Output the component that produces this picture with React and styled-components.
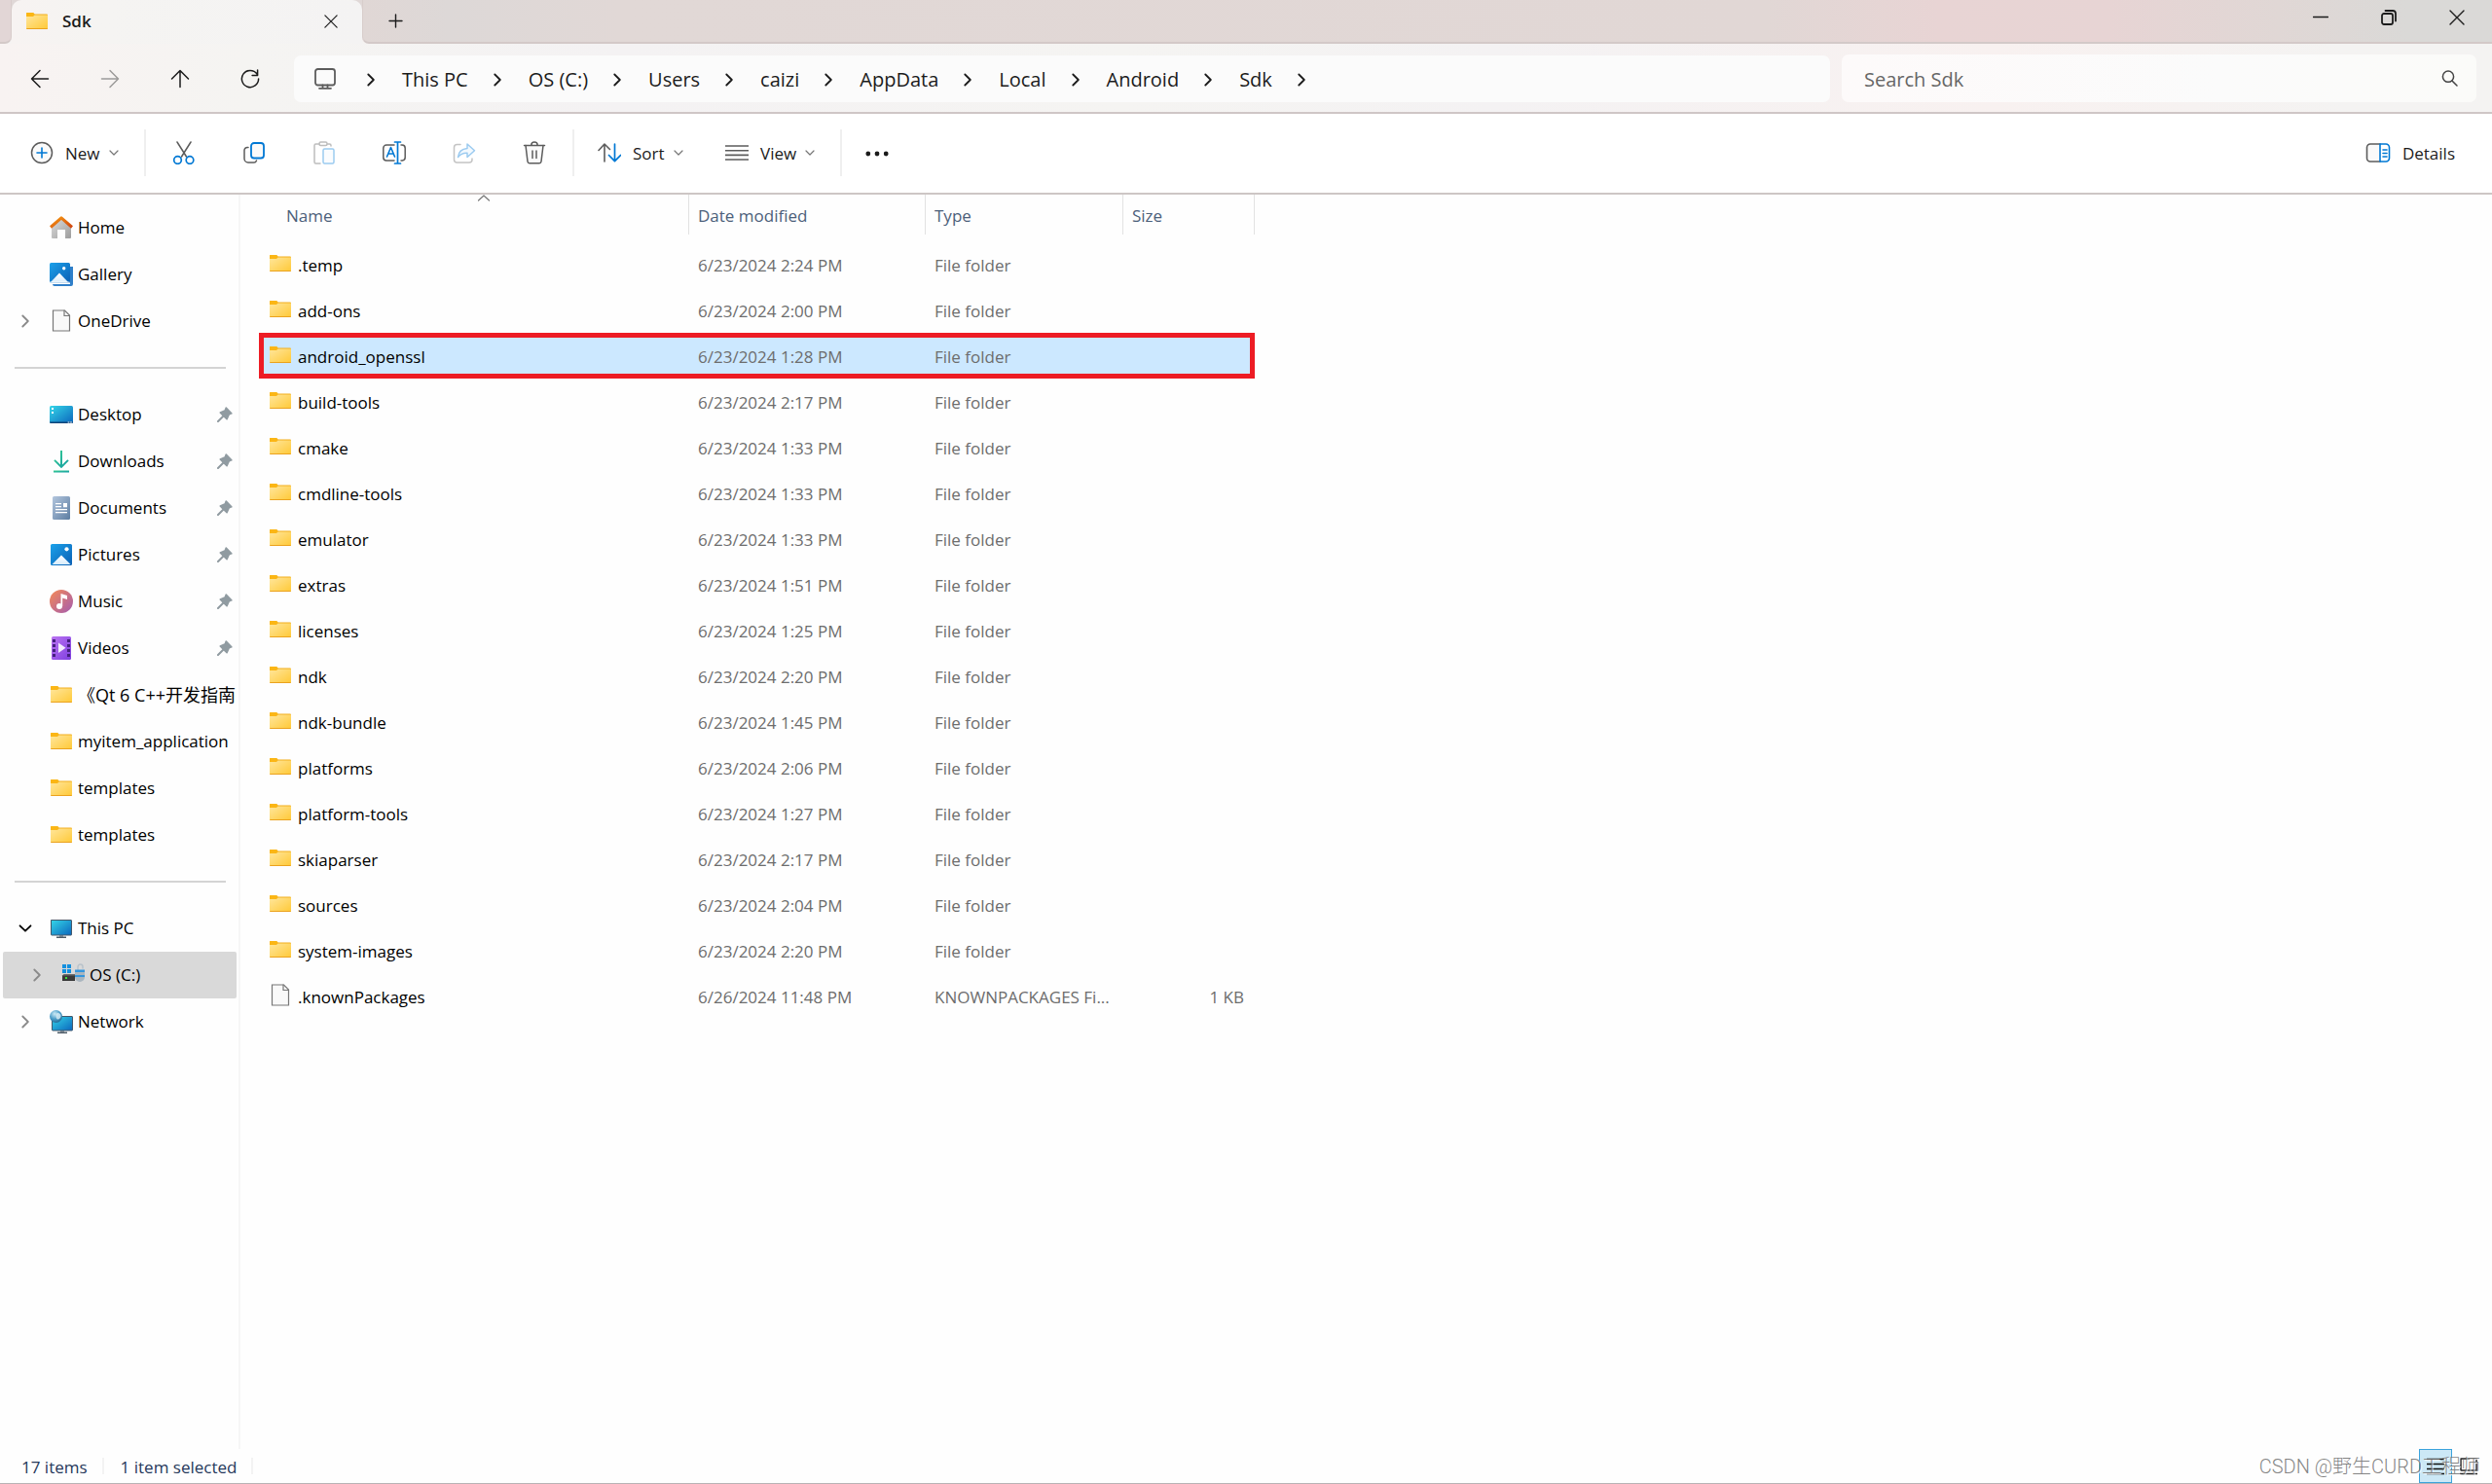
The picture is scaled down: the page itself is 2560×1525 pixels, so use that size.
import React from "react";
import styled, { createGlobalStyle, css } from "styled-components";

const GlobalStyle = createGlobalStyle`
  *, *::before, *::after { box-sizing: border-box; }
  body { margin: 0; background: #fefefe; }
  body, button, input {
    font-family: "Open Sans", "Noto Sans CJK SC", sans-serif;
    font-size: 17px;
    line-height: 24px;
    color: #1b1b1b;
  }
  button { border: 0; padding: 0; background: none; cursor: pointer; }
  svg { display: block; flex: none; }
`;

/* ---------- window frame ---------- */

const Window = styled.div`
  display: flex;
  flex-direction: column;
  min-height: 100vh;
  border-bottom: 1px solid #b9b2b4;
  background: #fefefe;
`;

const TitleBar = styled.header`
  display: flex;
  height: 45px;
  background: #f5f3f2;
`;

const TitleEdge = styled.div`
  width: 12px;
  background: #e2d6d6;
  border-right: 1px solid #d8cdcb;
  border-bottom: 2px solid #d3c9c8;
  border-bottom-right-radius: 7px;
`;

const TabSlot = styled.div`
  width: 360px;
  background: linear-gradient(#e0d8d7 20px, #f5f3f2 20px);
`;

const Tab = styled.div`
  display: flex;
  align-items: center;
  height: 100%;
  padding: 0 20px 2px 14px;
  border-radius: 10px 10px 0 0;
  background: linear-gradient(90deg, #f7f3f2, #f5f4f2 25%, #f4f3f3);
`;

const TabTitle = styled.span`
  flex: 1;
  padding-left: 14px;
  font-weight: 600;
`;

const TitleRest = styled.div`
  display: flex;
  flex: 1;
  align-items: flex-start;
  justify-content: space-between;
  border-left: 1px solid #d8cdcb;
  border-bottom: 2px solid #d3c9c8;
  border-bottom-left-radius: 7px;
  background: linear-gradient(90deg, #e0d7d5, #ddd8d7 4%, #e1d8d6 12%, #e1d7d5 66%, #e8d4d4 74%, #e7d4d4 82%, #e0d7d5 90%, #dad9d7 96%);
`;

const FrameButton = styled.button`
  display: flex;
  align-items: center;
  justify-content: center;
  width: ${(p) => p.$width || 70}px;
  height: ${(p) => p.$height || 36}px;
`;

const WindowButtons = styled.div`
  display: flex;
  padding-right: 1px;
`;

/* ---------- navigation ---------- */

const NavBar = styled.div`
  display: flex;
  align-items: center;
  height: 72px;
  padding: 1px 16px 0 5px;
  border-bottom: 2px solid #cfc6c6;
  background: linear-gradient(90deg, #f8f3f2, #f5f4f2 10%, #f4f2f3 25%, #f5f4f2 45%, #f4f2f3 60%, #f8f1f0 80%, #f6f2f1 88%, #f4f3f2 94%);
`;

const NavButton = styled.button`
  display: flex;
  align-items: center;
  justify-content: center;
  width: 72px;
  height: 48px;
  color: ${(p) => (p.disabled ? "#9c9b9a" : "#1b1b1b")};
`;

const AddressBar = styled.nav`
  display: flex;
  flex: 1578 1 1578px;
  align-items: center;
  height: 48px;
  margin-left: 9px;
  padding-left: 21px;
  border-radius: 7px;
  background: #fbfbfb;
`;

const AddressIcon = styled.span`
  padding-right: 6px;
`;

const Crumb = styled.a`
  padding-top: 2px;
  font-size: 20px;
  line-height: 28px;
  color: #1b1b1b;
  text-decoration: none;
`;

const CrumbArrow = styled.span`
  display: flex;
  padding: 2px 28px 0 26px;
`;

const SearchBox = styled.div`
  display: flex;
  flex: 652 1 652px;
  align-items: center;
  height: 49px;
  margin-left: 12px;
  padding: 0 19px 0 23px;
  border-radius: 7px;
  background: linear-gradient(90deg, #fdfafa, #fbfbfb 60%, #fbfbf9);
`;

const SearchInput = styled.input`
  flex: 1;
  min-width: 0;
  padding: 2px 0 0;
  border: 0;
  outline: 0;
  background: none;
  font-size: 20px;
  line-height: 28px;
  &::placeholder { color: #666; opacity: 1; }
`;

/* ---------- command bar ---------- */

const CommandBar = styled.div`
  display: flex;
  align-items: center;
  height: 83px;
  padding: 0 38px 2px 31px;
  border-bottom: 2px solid #cdc6c5;
  background: #fff;
`;

const TextCommand = styled.button`
  display: flex;
  align-items: center;
  width: ${(p) => p.$width}px;
  height: 48px;
  text-align: left;
`;

const CommandLabel = styled.span`
  padding: 3px 9px 0 12px;
`;

const CommandIcons = styled.div`
  display: flex;
  gap: 24px;
  padding: 0 15px;
`;

const IconCommand = styled.button`
  display: flex;
  align-items: center;
  justify-content: center;
  width: 48px;
  height: 48px;
`;

const CommandDivider = styled.div`
  width: 2px;
  height: 48px;
  background: #efefef;
`;

const CommandGroup = styled.div`
  display: flex;
  padding-left: ${(p) => p.$pad}px;
`;

const DetailsCommand = styled.button`
  display: flex;
  align-items: center;
  height: 48px;
  margin-left: auto;
  ${CommandLabel} { padding-right: 0; }
`;

/* ---------- body ---------- */

const Body = styled.div`
  display: flex;
  flex: 1;
`;

const Sidebar = styled.nav`
  flex: none;
  width: 247px;
  padding-top: 10px;
  border-right: 2px solid #f6f6f6;
`;

const TreeLink = styled.a`
  display: flex;
  align-items: center;
  height: 48px;
  margin: 0 2px 0 3px;
  padding-left: ${(p) => (p.$nested ? 22 : 10)}px;
  border-radius: 2px;
  overflow: hidden;
  white-space: nowrap;
  color: #000;
  text-decoration: none;
  ${(p) => p.$current && css`background: #d9d9d9;`}
`;

const TreeArrow = styled.span`
  display: flex;
  flex: none;
  justify-content: center;
  width: 26px;
  margin-right: 12px;
`;

const TreeText = styled.span`
  flex: 1;
  min-width: 0;
  padding-left: 5px;
  overflow: hidden;
  font-size: ${(p) => (p.$large ? 18 : 17)}px;
`;

const PinSlot = styled.span`
  padding-right: 4px;
`;

const TreeRule = styled.hr`
  height: 2px;
  margin: 23px 13px 23px 15px;
  border: 0;
  background: #d4d4d4;
`;

const Files = styled.main`
  flex: 1;
  min-width: 0;
  padding-left: 19px;
`;

const FileTable = styled.table`
  width: 1023px;
  border-collapse: collapse;
  table-layout: fixed;
`;

const Column = styled.col`
  width: ${(p) => p.$width}px;
`;

const HeadCell = styled.th`
  height: 48px;
  padding: 0;
  vertical-align: top;
  text-align: left;
  font-weight: 400;
`;

const HeadLabel = styled.div`
  position: relative;
  height: 41px;
  padding: 10px 0 0 ${(p) => (p.$first ? 28 : 9)}px;
  border-right: 1px solid #e2e2e2;
  color: #4c607a;
`;

const SortMark = styled.span`
  position: absolute;
  top: 0;
  left: calc(50% + 3px);
`;

const FileRow = styled.tr`
  height: 47px;
  ${(p) =>
    p.$selected &&
    css`
      background: #cce8ff;
      outline: 5px solid #ed1c24;
      outline-offset: -5px;
    `}
`;

const Cell = styled.td`
  padding: 2px 11px 0 9px;
  white-space: nowrap;
  color: #6d6d6d;
  text-align: ${(p) => (p.$right ? "right" : "left")};
`;

const FileName = styled.div`
  display: flex;
  align-items: center;
  gap: 6px;
  padding-left: 1px;
  color: #000;
  svg { margin-bottom: 3px; }
`;

/* ---------- status bar ---------- */

const StatusBar = styled.footer`
  position: relative;
  display: flex;
  align-items: center;
  height: 35px;
  padding: 0 7px 0 22px;
  color: #26395b;
`;

const StatusText = styled.span`
  margin-right: 17px;
  padding: 2px 17px 0 0;
  background: linear-gradient(#f3f3f3, #f3f3f3) right center / 2px 17px no-repeat;
`;

const ViewToggles = styled.div`
  display: flex;
  margin-left: auto;
`;

const ViewToggle = styled.button`
  display: flex;
  align-items: center;
  justify-content: center;
  width: 34px;
  height: 35px;
  border: 1px solid ${(p) => (p.$on ? "#3ba3dc" : "transparent")};
  background: ${(p) => (p.$on ? "#cce8f6" : "none")};
`;

const Watermark = styled.span`
  position: absolute;
  right: 12px;
  top: 4px;
  font-family: Roboto, "Noto Sans CJK SC", sans-serif;
  font-size: 20px;
  font-weight: 300;
  line-height: 28px;
  color: rgba(110, 110, 110, 0.85);
  text-shadow: 1px 1px 1px #fff;
  pointer-events: none;
`;

/* ---------- icons ---------- */

const Svg = ({ w = 24, h = w, box, children, ...rest }) => (
  <svg
    width={w}
    height={h}
    viewBox={box || `0 0 ${w} ${h}`}
    fill="none"
    stroke="currentColor"
    strokeWidth="1.5"
    strokeLinecap="round"
    strokeLinejoin="round"
    aria-hidden="true"
    {...rest}
  >
    {children}
  </svg>
);

const GREY = "#5c5c5c";
const BLUE = "#0078d4";

const HiddenSvg = styled.svg`
  position: absolute;
`;

const Gradients = () => (
  <HiddenSvg width="0" height="0" aria-hidden="true">
    <defs>
      <linearGradient id="folder" x1="0" y1="0" x2="1" y2="1">
        <stop offset="0" stopColor="#ffe69c" />
        <stop offset="1" stopColor="#ffc937" />
      </linearGradient>
      <linearGradient id="roof" x1="0" y1="0" x2="1" y2="1">
        <stop offset="0" stopColor="#f79a12" />
        <stop offset="1" stopColor="#cf4410" />
      </linearGradient>
      <linearGradient id="wall" x1="0" y1="0" x2="1" y2="1">
        <stop offset="0" stopColor="#dedede" />
        <stop offset="1" stopColor="#9c9c9c" />
      </linearGradient>
      <linearGradient id="photo" x1="0" y1="0" x2="1" y2="1">
        <stop offset="0" stopColor="#1ba1ea" />
        <stop offset="1" stopColor="#0a5fb4" />
      </linearGradient>
      <linearGradient id="hill" x1="0" y1="0" x2="0" y2="1">
        <stop offset="0" stopColor="#ffffff" />
        <stop offset="1" stopColor="#d8ecfb" />
      </linearGradient>
      <linearGradient id="screen" x1="0" y1="0" x2="1" y2="1">
        <stop offset="0" stopColor="#35d6e8" />
        <stop offset="1" stopColor="#0b66bd" />
      </linearGradient>
      <linearGradient id="down" x1="0" y1="0" x2="1" y2="1">
        <stop offset="0" stopColor="#3ccf91" />
        <stop offset="1" stopColor="#0e9aa4" />
      </linearGradient>
      <linearGradient id="paper" x1="0" y1="0" x2="1" y2="1">
        <stop offset="0" stopColor="#b3c6de" />
        <stop offset="1" stopColor="#5c7da1" />
      </linearGradient>
      <linearGradient id="music" x1="0" y1="0" x2="1" y2="1">
        <stop offset="0" stopColor="#f58a55" />
        <stop offset="1" stopColor="#a45cb0" />
      </linearGradient>
      <linearGradient id="film" x1="0" y1="0" x2="1" y2="1">
        <stop offset="0" stopColor="#bb74f2" />
        <stop offset="1" stopColor="#7f3fe0" />
      </linearGradient>
      <radialGradient id="globe" cx="0.4" cy="0.3" r="0.8">
        <stop offset="0" stopColor="#cdeaf6" />
        <stop offset="0.5" stopColor="#4d9fca" />
        <stop offset="1" stopColor="#1a5f8a" />
      </radialGradient>
    </defs>
  </HiddenSvg>
);

const FolderIcon = () => (
  <Svg stroke="none">
    <path d="M1 4a1 1 0 0 1 1-1h6l1.500 1.500H22a1 1 0 0 1 1 1V10H1z" fill="#f2ae1c" />
    <path d="M1 4a1 1 0 0 1 1-1h6l1.500 1.500L8 7H1z" fill="#fbb615" />
    <path d="M1 7h7l1.500-1.500H23V19a1 1 0 0 1-1 1H2a1 1 0 0 1-1-1z" fill="url(#folder)" />
    <path d="M1 19h22a1 1 0 0 1-1 1H2a1 1 0 0 1-1-1z" fill="#eba21d" />
  </Svg>
);

const FileIcon = () => (
  <Svg stroke="#777" strokeWidth="1.200" strokeLinejoin="miter">
    <path d="M3.500 1h12l5 5v16h-17z" fill="#f9f9f9" />
    <path d="M15 1v5.500h5.500" />
  </Svg>
);

const HomeIcon = () => (
  <Svg stroke="none">
    <path d="M2 11 12 2l10 9v11a1 1 0 0 1-1 1h-5v-9H8v9H3a1 1 0 0 1-1-1z" fill="url(#wall)" />
    <path d="M1 11.500 12 1.800l11 9.700" stroke="url(#roof)" strokeWidth="3" strokeLinecap="butt" />
  </Svg>
);

const GalleryIcon = () => (
  <Svg stroke="none">
    <path d="M5 22h16V4h3v18a2 2 0 0 1-2 2H5a2 2 0 0 1-2-2z" fill="#2f7fc9" />
    <rect width="21" height="21" rx="1.500" fill="url(#photo)" />
    <path d="m1 20 9-9.500 9 9.500z" fill="url(#hill)" />
    <path d="M0 19.500h20.500v1.700H0z" fill="#fff" opacity=".75" />
    <circle cx="14.700" cy="5.700" r="1.700" fill="#fff" />
  </Svg>
);

const DesktopIcon = () => (
  <Svg stroke="none">
    <rect y="3" width="24" height="18" rx="1.500" fill="url(#screen)" />
    <path d="M2 5h2v2H2zM2 9h2v2H2z" fill="#fff" />
    <path d="M0 19.500h24a1.500 1.500 0 0 1-1.500 1.500h-21A1.500 1.500 0 0 1 0 19.500z" fill="#0c4378" />
    <path d="M19 20h1M21.500 20h1" stroke="#fff" strokeWidth="1" />
  </Svg>
);

const DownloadIcon = () => (
  <Svg stroke="none">
    <path d="M11 1h2v14.500l5.300-5.300 1.400 1.400L12 19.300l-7.700-7.700 1.400-1.400L11 15.500z" fill="url(#down)" />
    <rect x="4" y="21.500" width="16" height="2" fill="url(#down)" />
  </Svg>
);

const DocumentIcon = () => (
  <Svg stroke="none">
    <rect x="3" width="18" height="24" rx="1.500" fill="url(#paper)" />
    <path d="M6 7h6v1.300H6zM6 10h6v1.300H6zM6 13h12v1.300H6zM6 16h12v1.300H6zM14 7h4v4.300h-4z" fill="#fff" />
  </Svg>
);

const PicturesIcon = () => (
  <Svg stroke="none">
    <rect x="1" y="1" width="22" height="22" rx="1.500" fill="url(#photo)" />
    <path d="m2.500 22 9.500-9.500 9.500 9.500z" fill="url(#hill)" />
    <circle cx="17.500" cy="6.300" r="2.100" fill="#fff" />
  </Svg>
);

const MusicIcon = () => (
  <Svg stroke="none">
    <circle cx="12" cy="12" r="12" fill="url(#music)" />
    <circle cx="10" cy="17" r="3" fill="#fff" />
    <path d="M11.500 4 18 6v4l-4.800-1.500V17h-1.700z" fill="#fff" />
  </Svg>
);

const VideosIcon = () => (
  <Svg stroke="none">
    <rect x="2" width="20" height="24" rx="1.500" fill="url(#film)" />
    <path d="M3 3h3v3H3zM3 8h3v3H3zM3 13h3v3H3zM3 18h3v3H3zM18 3h3v3h-3zM18 8h3v3h-3zM18 13h3v3h-3zM18 18h3v3h-3z" fill="#45207f" />
    <path d="m9 6.500 7.500 5.200L9 17z" fill="#f2eafc" />
  </Svg>
);

const PcIcon = () => (
  <Svg stroke="none">
    <path d="M10 18h4v3h-4z" fill="#9aa5ad" />
    <path d="M7 20.500h10V22H7z" fill="#4c5a66" />
    <rect x="1.500" y="3.500" width="21" height="15.500" rx=".5" fill="url(#screen)" stroke="#44586b" strokeWidth="1" />
  </Svg>
);

const DriveIcon = () => (
  <Svg stroke="none">
    <path d="M1 1h4v4H1zM6 1h4v4H6zM1 6h4v4H1zM6 6h4v4H6z" fill="#1490df" />
    <path d="M1 12.500 2.500 11H14v7H1z" fill="#6b6b6b" />
    <path d="M1 12.500h13V18H1z" fill="#3a3a3a" />
    <path d="M4 14h2v2H4z" fill="#3fdc3f" />
    <path d="M17 7V3.500a2.500 2.500 0 0 1 5 0V5" stroke="#b9c3cb" strokeWidth="1.500" />
    <path d="M14 7h10v7a5 5 0 0 1-10 0z" fill="#aab6bf" />
    <path d="M14 6.500h10V9H14zM14 12h10v2H14z" fill="#3596dd" />
  </Svg>
);

const NetworkIcon = () => (
  <Svg stroke="none">
    <path d="M11 21h4v2h-4z" fill="#9aa5ad" />
    <path d="M8 22.500h10V24H8z" fill="#4c5a66" />
    <rect x="2.500" y="6.500" width="21" height="14.500" rx=".5" fill="url(#screen)" stroke="#44586b" strokeWidth="1" />
    <circle cx="6.500" cy="6.500" r="6.500" fill="url(#globe)" />
    <path d="M7 3.500c2-1.500 4 0 4.500 2S9.500 10 8 9.500 6 5 7 3.500z" fill="#d9edf5" opacity=".8" />
  </Svg>
);

const PinIcon = () => (
  <Svg w={16} stroke="none">
    <path d="M9.800.6 15.400 6.200c.5.500.3 1.200-.3 1.400l-2.300.8-2 4.600c-.2.600-.9.700-1.300.3L6.300 10.200 1.500 15 0 16l1-1.500 4.800-4.800-3.100-3.200c-.4-.4-.3-1.100.3-1.300l4.600-2 .8-2.300c.2-.6.900-.8 1.400-.3z" fill="#909ba1" />
    <path d="M6 10 1 15" stroke="#909ba1" strokeWidth="2" />
  </Svg>
);

const ChevronRight = ({ color = "#1b1b1b" }) => (
  <Svg w={8} h={14} stroke={color} strokeWidth="1.800">
    <path d="m1.300 1.500 5.500 5.500-5.500 5.500" />
  </Svg>
);

const ChevronDown = () => (
  <Svg w={14} h={8} strokeWidth="1.800">
    <path d="M1.500 1.300 7 6.700l5.500-5.400" />
  </Svg>
);

const SmallChevron = () => (
  <Svg w={10} h={6} stroke="#777" strokeWidth="1.200">
    <path d="m1 1 4 4 4-4" />
  </Svg>
);

const BackIcon = () => (
  <Svg w={20}>
    <path d="M18.500 10H1.500M10 1.500 1.500 10l8.500 8.500" />
  </Svg>
);

const ForwardIcon = () => (
  <Svg w={20}>
    <path d="M1.500 10h17M10 1.500l8.500 8.500-8.500 8.500" />
  </Svg>
);

const UpIcon = () => (
  <Svg w={20}>
    <path d="M10 18.500v-17M1.500 10 10 1.500l8.500 8.500" />
  </Svg>
);

const RefreshIcon = () => (
  <Svg w={20}>
    <path d="M18.600 10A8.600 8.600 0 1 1 17 5M17.600 1v5.500h-5.500" />
  </Svg>
);

const MonitorIcon = () => (
  <Svg w={22} stroke="#5c5c5c" strokeWidth="1.800">
    <rect x="1" y="1" width="20" height="16.500" rx="2.500" />
    <path d="M8.500 17.500v3M13.500 17.500v3M5 20.800h12" />
  </Svg>
);

const SearchIcon = () => (
  <Svg w={17} stroke="#444">
    <circle cx="7" cy="6.700" r="5.600" />
    <path d="m11 11 5 5" />
  </Svg>
);

const CloseIcon = ({ w = 16 }) => (
  <Svg w={w} box="0 0 16 16" strokeWidth="1.400">
    <path d="m1 1 14 14M15 1 1 15" />
  </Svg>
);

const PlusIcon = () => (
  <Svg w={15} strokeWidth="1.400">
    <path d="M7.500 1v13M1 7.500h13" />
  </Svg>
);

const MinimizeIcon = () => (
  <Svg w={16}>
    <path d="M.5 7.500h15" />
  </Svg>
);

const RestoreIcon = () => (
  <Svg w={16} strokeWidth="1.800">
    <rect x="1" y="4" width="11" height="11" rx="2" />
    <path d="M4.500 1H12a3 3 0 0 1 3 3v7.500" />
  </Svg>
);

const NewIcon = () => (
  <Svg stroke={GREY}>
    <circle cx="12" cy="12" r="10.500" fill="#fafafa" />
    <path d="M12 7v10M7 12h10" stroke={BLUE} strokeWidth="1.600" />
  </Svg>
);

const CutIcon = () => (
  <Svg stroke={GREY}>
    <path d="M5 1l9.500 15M19 1 9.500 16" />
    <circle cx="5.500" cy="19.500" r="3.800" stroke={BLUE} strokeWidth="1.700" fill="#fff" />
    <circle cx="18" cy="19.500" r="3.800" stroke={BLUE} strokeWidth="1.700" fill="#fff" />
  </Svg>
);

const CopyIcon = () => (
  <Svg stroke={GREY}>
    <path d="M6 6.500H5A3 3 0 0 0 2 9.500V18a4 4 0 0 0 4 4h5.500a3 3 0 0 0 3-2" />
    <rect x="9" y="2" width="13" height="15.500" rx="3" stroke={BLUE} strokeWidth="1.800" fill="#fafafa" />
  </Svg>
);

const PasteIcon = () => (
  <Svg stroke="#bdbdbd">
    <path d="M7 3H3.500A1.500 1.500 0 0 0 2 4.500v17A1.500 1.500 0 0 0 3.500 23H8M15.500 3h2A1.500 1.500 0 0 1 19 4.500V5" />
    <rect x="7" y="1" width="8" height="3.500" rx="1.500" />
    <rect x="11" y="8" width="11" height="15" rx="1.500" stroke="#9ccbf0" fill="#fafcfe" />
  </Svg>
);

const RenameIcon = () => (
  <Svg stroke={GREY}>
    <path d="M12 4H4a3.200 3.200 0 0 0-3.200 3.200v9.600A3.200 3.200 0 0 0 4 20h8M19 4h1.200a3.200 3.200 0 0 1 3 3.200v9.600a3.200 3.200 0 0 1-3 3.200H19" />
    <path d="M15.500 1v22M12.500 1h6M12.500 23h6" stroke={BLUE} strokeWidth="1.700" />
    <path d="m4.500 16 4-9.500 4 9.500M6 13h5" stroke={BLUE} strokeWidth="1.600" />
  </Svg>
);

const ShareIcon = () => (
  <Svg stroke="#c4c4c4">
    <path d="M8 3.500H4.500A3 3 0 0 0 1.500 6.500V19a3 3 0 0 0 3 3h12.500a3 3 0 0 0 3-3v-1" />
    <path d="M15 3v4.500C9 8 6 11.500 5.500 16.500c2.500-3.500 5.500-4.500 9.500-4.300V16.500L22.500 9.700z" stroke="#9ccbf0" fill="#f3f9fe" />
  </Svg>
);

const TrashIcon = () => (
  <Svg stroke={GREY}>
    <path d="M3 4.500 5 21a2 2 0 0 0 2 1.800h10a2 2 0 0 0 2-1.800l2-16.500" fill="#fafafa" />
    <path d="M1.500 4.500h21M8.800 4.200a3.200 3.200 0 0 1 6.400 0M10 10v7.500M14 10v7.500" />
  </Svg>
);

const SortIcon = () => (
  <Svg stroke={GREY} strokeWidth="1.600">
    <path d="M7 21V3.500M1 9.500l6-6.500 5.500 5.500" />
    <path d="M17.500 3v17.500M11.500 14.500l6 6.200 6-6.200" stroke={BLUE} strokeWidth="1.700" />
  </Svg>
);

const ViewIcon = () => (
  <Svg stroke={GREY} strokeWidth="1.600" strokeLinecap="butt">
    <path d="M0 5h24M0 9.700h24M0 14.400h24M0 19h24" />
  </Svg>
);

const MoreIcon = () => (
  <Svg stroke="none" fill="#1b1b1b">
    <circle cx="2.800" cy="13" r="2.400" />
    <circle cx="12" cy="13" r="2.400" />
    <circle cx="21.200" cy="13" r="2.400" />
  </Svg>
);

const DetailsIcon = () => (
  <Svg w={26} h={20} stroke={GREY} strokeWidth="1.600">
    <path d="M15 -1H5A3.500 3.500 0 0 0 1.500 2.500v15A3.500 3.500 0 0 0 5 19h10" fill="none" stroke="none" />
    <path d="M15 1H5A3.500 3.500 0 0 0 1.500 4.500v11A3.500 3.500 0 0 0 5 19h10" fill="#fafafa" />
    <path d="M15 1h6a3.500 3.500 0 0 1 3.500 3.500v11A3.500 3.500 0 0 1 21 19h-6zM18 7h4M18 10.500h4M18 14h4" stroke={BLUE} />
  </Svg>
);

const DetailsViewIcon = () => (
  <Svg w={18} h={18} stroke="#111" strokeLinecap="butt">
    <path d="M0 1.500h18M0 6.500h18M0 11.500h18M0 16.500h18" />
  </Svg>
);

const LargeViewIcon = () => (
  <Svg w={18} h={18} stroke="#222" strokeLinecap="butt">
    <rect x="1" y="1" width="16" height="12" />
    <path d="M0 16.500h18" />
  </Svg>
);

/* ---------- data ---------- */

const crumbs = ["This PC", "OS (C:)", "Users", "caizi", "AppData", "Local", "Android", "Sdk"];

const places = [
  { name: "Home", icon: HomeIcon },
  { name: "Gallery", icon: GalleryIcon },
  { name: "OneDrive", icon: FileIcon, arrow: "closed" },
];

const pinned = [
  { name: "Desktop", icon: DesktopIcon, pin: true },
  { name: "Downloads", icon: DownloadIcon, pin: true },
  { name: "Documents", icon: DocumentIcon, pin: true },
  { name: "Pictures", icon: PicturesIcon, pin: true },
  { name: "Music", icon: MusicIcon, pin: true },
  { name: "Videos", icon: VideosIcon, pin: true },
  { name: "《Qt 6 C++开发指南", icon: FolderIcon, large: true },
  { name: "myitem_application", icon: FolderIcon },
  { name: "templates", icon: FolderIcon },
  { name: "templates", icon: FolderIcon },
];

const devices = [
  { name: "This PC", icon: PcIcon, arrow: "open" },
  { name: "OS (C:)", icon: DriveIcon, arrow: "closed", nested: true, current: true },
  { name: "Network", icon: NetworkIcon, arrow: "closed" },
];

const files = [
  [".temp", "6/23/2024 2:24 PM"],
  ["add-ons", "6/23/2024 2:00 PM"],
  ["android_openssl", "6/23/2024 1:28 PM"],
  ["build-tools", "6/23/2024 2:17 PM"],
  ["cmake", "6/23/2024 1:33 PM"],
  ["cmdline-tools", "6/23/2024 1:33 PM"],
  ["emulator", "6/23/2024 1:33 PM"],
  ["extras", "6/23/2024 1:51 PM"],
  ["licenses", "6/23/2024 1:25 PM"],
  ["ndk", "6/23/2024 2:20 PM"],
  ["ndk-bundle", "6/23/2024 1:45 PM"],
  ["platforms", "6/23/2024 2:06 PM"],
  ["platform-tools", "6/23/2024 1:27 PM"],
  ["skiaparser", "6/23/2024 2:17 PM"],
  ["sources", "6/23/2024 2:04 PM"],
  ["system-images", "6/23/2024 2:20 PM"],
  [".knownPackages", "6/26/2024 11:48 PM", "KNOWNPACKAGES Fi...", "1 KB"],
];

/* ---------- parts ---------- */

const TreeItem = ({ name, icon: Icon, arrow, pin, nested, current, large }) => (
  <TreeLink href="#" $nested={nested} $current={current}>
    <TreeArrow>
      {arrow === "closed" && <ChevronRight color="#8a8a8a" />}
      {arrow === "open" && <ChevronDown />}
    </TreeArrow>
    <Icon />
    <TreeText $large={large}>{name}</TreeText>
    {pin && (
      <PinSlot>
        <PinIcon />
      </PinSlot>
    )}
  </TreeLink>
);

const TreeGroup = ({ items }) => items.map((item, i) => <TreeItem key={i} {...item} />);

export default function App() {
  return (
    <Window>
      <GlobalStyle />
      <Gradients />
      <TitleBar>
        <TitleEdge />
        <TabSlot>
          <Tab>
            <FolderIcon />
            <TabTitle>Sdk</TabTitle>
            <FrameButton $width={24} aria-label="Close tab">
              <CloseIcon w={14} />
            </FrameButton>
          </Tab>
        </TabSlot>
        <TitleRest>
          <FrameButton $width={67} $height={43} aria-label="New tab">
            <PlusIcon />
          </FrameButton>
          <WindowButtons>
            <FrameButton aria-label="Minimize">
              <MinimizeIcon />
            </FrameButton>
            <FrameButton aria-label="Restore">
              <RestoreIcon />
            </FrameButton>
            <FrameButton aria-label="Close">
              <CloseIcon />
            </FrameButton>
          </WindowButtons>
        </TitleRest>
      </TitleBar>

      <NavBar>
        <NavButton aria-label="Back"><BackIcon /></NavButton>
        <NavButton aria-label="Forward" disabled><ForwardIcon /></NavButton>
        <NavButton aria-label="Up"><UpIcon /></NavButton>
        <NavButton aria-label="Refresh"><RefreshIcon /></NavButton>
        <AddressBar aria-label="Address">
          <AddressIcon><MonitorIcon /></AddressIcon>
          {crumbs.map((crumb) => (
            <React.Fragment key={crumb}>
              <CrumbArrow><ChevronRight /></CrumbArrow>
              <Crumb href="#">{crumb}</Crumb>
            </React.Fragment>
          ))}
          <CrumbArrow><ChevronRight /></CrumbArrow>
        </AddressBar>
        <SearchBox>
          <SearchInput type="text" placeholder="Search Sdk" aria-label="Search Sdk" />
          <SearchIcon />
        </SearchBox>
      </NavBar>

      <CommandBar>
        <TextCommand $width={117}>
          <NewIcon />
          <CommandLabel>New</CommandLabel>
          <SmallChevron />
        </TextCommand>
        <CommandDivider />
        <CommandIcons>
          <IconCommand aria-label="Cut"><CutIcon /></IconCommand>
          <IconCommand aria-label="Copy"><CopyIcon /></IconCommand>
          <IconCommand aria-label="Paste"><PasteIcon /></IconCommand>
          <IconCommand aria-label="Rename"><RenameIcon /></IconCommand>
          <IconCommand aria-label="Share"><ShareIcon /></IconCommand>
          <IconCommand aria-label="Delete"><TrashIcon /></IconCommand>
        </CommandIcons>
        <CommandDivider />
        <CommandGroup $pad={24}>
          <TextCommand $width={131}>
            <SortIcon />
            <CommandLabel>Sort</CommandLabel>
            <SmallChevron />
          </TextCommand>
          <TextCommand $width={118}>
            <ViewIcon />
            <CommandLabel>View</CommandLabel>
            <SmallChevron />
          </TextCommand>
        </CommandGroup>
        <CommandDivider />
        <CommandGroup $pad={12}>
          <IconCommand aria-label="See more"><MoreIcon /></IconCommand>
        </CommandGroup>
        <DetailsCommand>
          <DetailsIcon />
          <CommandLabel>Details</CommandLabel>
        </DetailsCommand>
      </CommandBar>

      <Body>
        <Sidebar aria-label="Folders">
          <TreeGroup items={places} />
          <TreeRule />
          <TreeGroup items={pinned} />
          <TreeRule />
          <TreeGroup items={devices} />
        </Sidebar>
        <Files>
          <FileTable>
            <colgroup>
              <Column $width={442} />
              <Column $width={243} />
              <Column $width={203} />
              <Column $width={135} />
            </colgroup>
            <thead>
              <tr>
                <HeadCell>
                  <HeadLabel $first>
                    Name
                    <SortMark>
                      <Svg w={14} h={7} stroke="#777" strokeWidth="1.200">
                        <path d="m1.500 6 5.500-5 5.500 5" />
                      </Svg>
                    </SortMark>
                  </HeadLabel>
                </HeadCell>
                <HeadCell><HeadLabel>Date modified</HeadLabel></HeadCell>
                <HeadCell><HeadLabel>Type</HeadLabel></HeadCell>
                <HeadCell><HeadLabel>Size</HeadLabel></HeadCell>
              </tr>
            </thead>
            <tbody>
              {files.map(([name, date, type, size]) => (
                <FileRow key={name} $selected={name === "android_openssl"}>
                  <Cell>
                    <FileName>
                      {type ? <FileIcon /> : <FolderIcon />}
                      {name}
                    </FileName>
                  </Cell>
                  <Cell>{date}</Cell>
                  <Cell>{type || "File folder"}</Cell>
                  <Cell $right>{size}</Cell>
                </FileRow>
              ))}
            </tbody>
          </FileTable>
        </Files>
      </Body>

      <StatusBar>
        <StatusText>17 items</StatusText>
        <StatusText>1 item selected</StatusText>
        <ViewToggles>
          <ViewToggle $on aria-label="Details view"><DetailsViewIcon /></ViewToggle>
          <ViewToggle aria-label="Large icons view"><LargeViewIcon /></ViewToggle>
        </ViewToggles>
        <Watermark>CSDN @野生CURD工程师</Watermark>
      </StatusBar>
    </Window>
  );
}
